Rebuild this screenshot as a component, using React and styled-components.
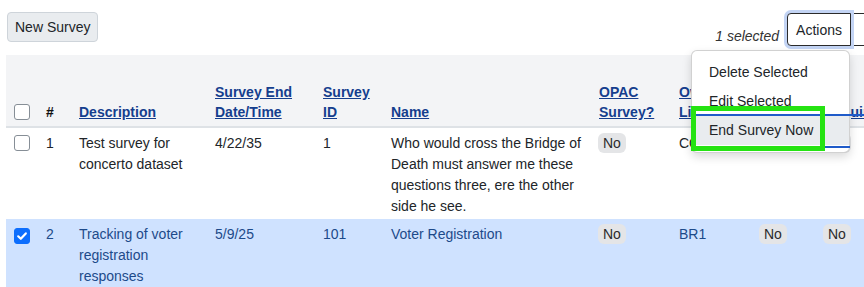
import React from "react";
import styled, { createGlobalStyle } from "styled-components";

const GlobalStyle = createGlobalStyle`
  html, body {
    margin: 0;
    padding: 0;
    overflow: hidden;
    background: #fff;
  }
  body {
    font-family: "Liberation Sans", Arial, sans-serif;
    font-size: 14px;
    color: #212529;
  }
`;

const columns = [32, 33, 136, 108, 68, 208, 80, 81, 64, 100];

const headers = [
  { key: "num", label: "#", plain: true },
  { key: "desc", label: "Description" },
  { key: "end", label: ["Survey End", "Date/Time"] },
  { key: "id", label: ["Survey", "ID"] },
  { key: "name", label: "Name" },
  { key: "opac", label: ["OPAC", "Survey?"] },
  { key: "lib", label: ["Owning", "Library"] },
  { key: "ret", label: ["Retired?"] },
  { key: "req", label: ["Required?"] },
];

const rows = [
  {
    num: 1,
    desc: "Test survey for concerto dataset",
    end: "4/22/35",
    id: "1",
    name: "Who would cross the Bridge of Death must answer me these questions three, ere the other side he see.",
    lib: "CONCERTO",
    selected: false,
  },
  {
    num: 2,
    desc: "Tracking of voter registration responses",
    end: "5/9/25",
    id: "101",
    name: "Voter Registration",
    lib: "BR1",
    selected: true,
  },
];

function App() {
  return (
    <>
      <GlobalStyle />
      <Page>
        <Toolbar>
          <NewButton>New Survey</NewButton>
          <RightTools>
            <SelectedCount>1 selected</SelectedCount>
            <ButtonGroup>
              <ActionsButton>Actions</ActionsButton>
              <ToggleButton />
              <Menu>
                <MenuItem>Delete Selected</MenuItem>
                <MenuItem>Edit Selected</MenuItem>
                <MenuItem $active>End Survey Now</MenuItem>
                <FocusLine $top={63} $left={2} $width={175} />
                <FocusLine $top={95} $left={1} $width={157} />
                <Highlight />
              </Menu>
            </ButtonGroup>
          </RightTools>
        </Toolbar>

        <Table>
          <colgroup>
            {columns.map((w, i) => (
              <col key={i} style={{ width: w }} />
            ))}
          </colgroup>
          <thead>
            <tr>
              <Th>
                <Check />
              </Th>
              {headers.map((h) => (
                <Th key={h.key}>
                  {h.plain ? (
                    h.label
                  ) : (
                    <SortLink>
                      {Array.isArray(h.label)
                        ? h.label.map((l, i) => (
                            <React.Fragment key={i}>
                              {i > 0 && <br />}
                              {l}
                            </React.Fragment>
                          ))
                        : h.label}
                    </SortLink>
                  )}
                </Th>
              ))}
            </tr>
          </thead>
          <tbody>
            {rows.map((r) => (
              <Row key={r.num} $selected={r.selected}>
                <Td>
                  <Check $checked={r.selected}>
                    {r.selected && (
                      <svg width="12" height="12" viewBox="0 0 12 12">
                        <path
                          d="M2.2 6.3 L4.8 8.8 L9.8 3.4"
                          fill="none"
                          stroke="#fff"
                          strokeWidth="2.2"
                          strokeLinecap="round"
                          strokeLinejoin="round"
                        />
                      </svg>
                    )}
                  </Check>
                </Td>
                <Td>{r.num}</Td>
                <Td>{r.desc}</Td>
                <Td>{r.end}</Td>
                <Td>{r.id}</Td>
                <Td>{r.name}</Td>
                <Td>
                  <Badge>No</Badge>
                </Td>
                <Td>{r.lib}</Td>
                <Td>
                  <Badge>No</Badge>
                </Td>
                <Td>
                  <Badge>No</Badge>
                </Td>
              </Row>
            ))}
          </tbody>
        </Table>
      </Page>
    </>
  );
}

export default App;

const Page = styled.div`
  box-sizing: border-box;
  width: 888px;
  height: 287px;
  padding: 0 6px;
`;

const Toolbar = styled.div`
  display: flex;
  justify-content: space-between;
  align-items: flex-start;
  box-sizing: border-box;
  height: 55px;
  padding-top: 12px;
`;

const NewButton = styled.button`
  height: 30px;
  margin-left: 1px;
  padding: 0 7px;
  font-family: inherit;
  font-size: 14px;
  color: #212529;
  background: #e9ecef;
  border: 1px solid #ced4da;
  border-radius: 4px;
`;

const RightTools = styled.div`
  display: flex;
  align-items: flex-end;
  gap: 8px;
  margin-top: 1px;
`;

const SelectedCount = styled.span`
  font-style: italic;
  font-size: 14px;
  line-height: 21px;
  color: #333;
  margin-bottom: -1px;
`;

const ButtonGroup = styled.div`
  position: relative;
  display: flex;
  height: 33px;
`;

const ActionsButton = styled.button`
  height: 33px;
  padding: 0 8px;
  font-family: inherit;
  font-size: 14px;
  color: #212529;
  background: #fff;
  border: 1px solid #2b2b2b;
  border-radius: 4px 0 0 4px;
  box-shadow: 0 0 0 3px #c3d4f4;
  position: relative;
  z-index: 1;
`;

const ToggleButton = styled.button`
  width: 31px;
  height: 33px;
  background: #fff;
  border: 1px solid #2b2b2b;
  border-left: none;
  border-radius: 0 4px 4px 0;
`;

const Menu = styled.div`
  position: absolute;
  top: 37px;
  right: 32px;
  z-index: 5;
  box-sizing: border-box;
  width: 159px;
  padding: 7px 0;
  background: #fff;
  border: 1px solid rgba(0, 0, 0, 0.18);
  border-radius: 6px;
  box-shadow: 0 4px 10px rgba(0, 0, 0, 0.15);
`;

const MenuItem = styled.div`
  padding: 4px 16px 4px 17px;
  line-height: 21px;
  font-size: 14px;
  color: #212529;
  white-space: nowrap;
  background: ${(p) => (p.$active ? "#e9ecef" : "transparent")};
`;

const FocusLine = styled.div`
  position: absolute;
  top: ${(p) => p.$top}px;
  left: ${(p) => p.$left}px;
  width: ${(p) => p.$width}px;
  height: 2px;
  background: #1f5bc9;
`;

const Highlight = styled.div`
  position: absolute;
  top: 55px;
  left: -1px;
  box-sizing: border-box;
  width: 134px;
  height: 45px;
  border: 5px solid #25e312;
`;

const Table = styled.table`
  table-layout: fixed;
  width: ${columns.reduce((a, b) => a + b, 0)}px;
  border-collapse: collapse;
  font-size: 14px;
`;

const Th = styled.th`
  height: 72px;
  box-sizing: border-box;
  padding: 4px 8px 4px;
  vertical-align: bottom;
  text-align: left;
  font-weight: 700;
  line-height: 20px;
  color: #111;
  background: #f3f4f6;
  border-bottom: 2px solid #dee2e6;
  white-space: nowrap;
  overflow: visible;
`;

const SortLink = styled.a`
  color: #153e8e;
  text-decoration: underline;
  cursor: pointer;
`;

const Row = styled.tr`
  background: ${(p) => (p.$selected ? "#cfe2ff" : "#fff")};
  color: ${(p) => (p.$selected ? "#1d4a8a" : "#212529")};
`;

const Td = styled.td`
  padding: 5px 8px 2px;
  vertical-align: top;
  line-height: 21px;
`;

const Check = styled.span`
  display: inline-flex;
  align-items: center;
  justify-content: center;
  box-sizing: border-box;
  width: 16px;
  height: 16px;
  vertical-align: -3px;
  border: 1px solid ${(p) => (p.$checked ? "#0d6efd" : "#868e96")};
  border-radius: 3px;
  background: ${(p) => (p.$checked ? "#0d6efd" : "#fff")};
`;

const Badge = styled.span`
  display: inline-block;
  padding: 0 5px;
  line-height: 20px;
  border-radius: 6px;
  background: #e4e5e7;
  color: #2b2b2b;
  margin-left: -1px;
`;
